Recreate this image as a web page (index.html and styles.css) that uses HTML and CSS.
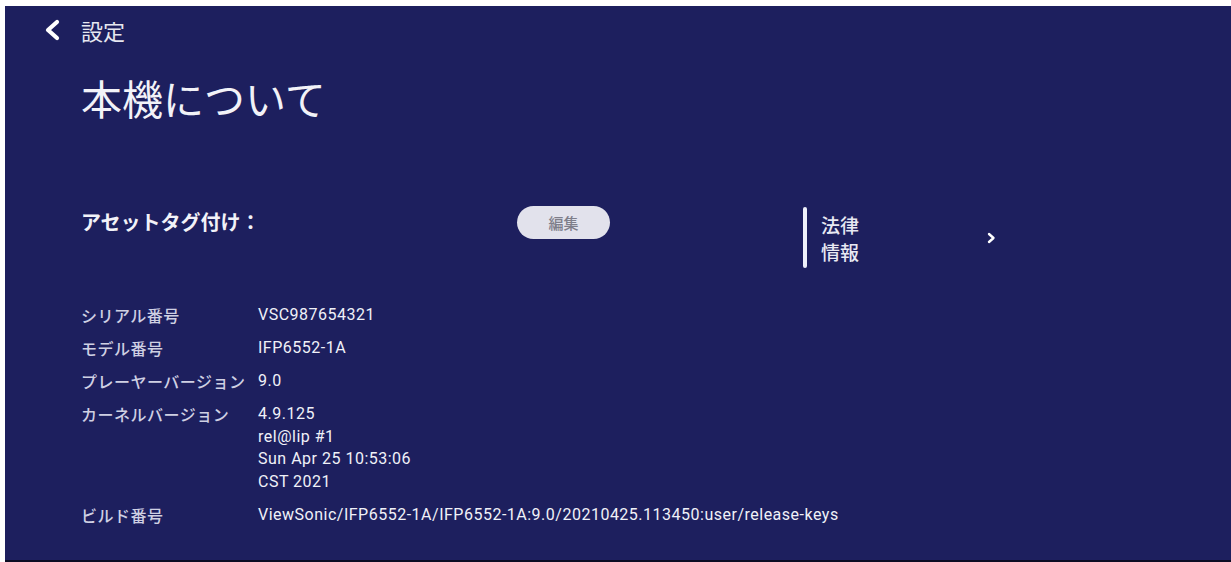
FILE: index.html
```html
<!DOCTYPE html>
<html lang="ja">
<head>
<meta charset="utf-8">
<title>本機について</title>
<link rel="stylesheet" href="styles.css">
</head>
<body>
<div class="panel">
  <header class="topbar">
    <svg class="back" width="18" height="22" viewBox="0 0 18 22"><polyline points="14,3 5,11 14,19" fill="none" stroke="#ffffff" stroke-width="4.2" stroke-linecap="round" stroke-linejoin="round"/></svg>
    <span class="crumb">設定</span>
  </header>
  <main class="content">
    <h1 class="title">本機について</h1>
    <section class="asset-row">
      <div class="asset-label">アセットタグ付け：</div>
      <button class="edit-btn">編集</button>
      <div class="legal">
        <span class="legal-bar"></span>
        <span class="legal-text">法律<br>情報</span>
        <svg class="legal-arrow" width="9" height="12" viewBox="0 0 9 12"><polyline points="2,2 6.5,6 2,10" fill="none" stroke="#ffffff" stroke-width="2.4" stroke-linecap="round" stroke-linejoin="round"/></svg>
      </div>
    </section>
    <dl class="info">
      <dt>シリアル番号</dt><dd>VSC987654321</dd>
      <dt>モデル番号</dt><dd>IFP6552-1A</dd>
      <dt>プレーヤーバージョン</dt><dd>9.0</dd>
      <dt>カーネルバージョン</dt><dd>4.9.125<br>rel@lip #1<br>Sun Apr 25 10:53:06<br>CST 2021</dd>
      <dt>ビルド番号</dt><dd>ViewSonic/IFP6552-1A/IFP6552-1A:9.0/20210425.113450:user/release-keys</dd>
    </dl>
  </main>
</div>
</body>
</html>
```
FILE: styles.css
```css
html, body {
  margin: 0;
  padding: 0;
  background: #ffffff;
}
body {
  width: 1231px;
  height: 562px;
  overflow: hidden;
  font-family: "Noto Sans CJK JP", Roboto, sans-serif;
}
.panel {
  margin: 6px 0 0 5px;
  height: 554px;
  background: #1d1f5e;
  border-bottom: 2px solid #0c0d24;
  padding-left: 38px;
  box-sizing: content-box;
  color: #eceef6;
}
.topbar {
  display: flex;
  align-items: center;
  gap: 20px;
  padding-top: 10px;
  height: 28px;
}
.back {
  display: block;
}
.crumb {
  font-size: 22px;
  line-height: 28px;
  color: #e6e7f0;
}
.content {
  padding-left: 38px;
}
.title {
  margin: 28px 0 0 0;
  font-size: 41px;
  line-height: 50px;
  font-weight: 400;
  color: #f2f2f8;
}
.asset-row {
  display: flex;
  align-items: flex-start;
  margin-top: 84px;
  height: 62px;
}
.asset-label {
  width: 436px;
  font-size: 20px;
  line-height: 32px;
  font-weight: 700;
  color: #f2f2f8;
}
.edit-btn {
  width: 93px;
  height: 33px;
  border: none;
  border-radius: 17px;
  background: #e2e2ec;
  color: #7e7e8a;
  font-family: "Noto Sans CJK JP", sans-serif;
  font-size: 15px;
  font-weight: 500;
  padding: 0;
}
.legal {
  display: flex;
  align-items: center;
  margin-left: 193px;
  margin-top: 1px;
}
.legal-bar {
  width: 4px;
  height: 61px;
  background: #eef0fa;
  border-radius: 2px;
}
.legal-text {
  margin-left: 14px;
  width: 40px;
  font-size: 19px;
  line-height: 27px;
  font-weight: 500;
  color: #e8e9f3;
}
.legal-arrow {
  margin-left: 126px;
  display: block;
}
.info {
  display: grid;
  grid-template-columns: 177px auto;
  row-gap: 10.5px;
  margin: 36px 0 0 0;
  line-height: 22.5px;
}
.info dt {
  font-size: 16px;
  font-weight: 500;
  letter-spacing: 0.5px;
  color: #cfd0e3;
  white-space: nowrap;
}
.info dd {
  margin: 0;
  font-family: Roboto, "Noto Sans CJK JP", sans-serif;
  font-size: 16px;
  font-weight: 400;
  letter-spacing: 0.5px;
  color: #f0f1f8;
  white-space: nowrap;
}
```
